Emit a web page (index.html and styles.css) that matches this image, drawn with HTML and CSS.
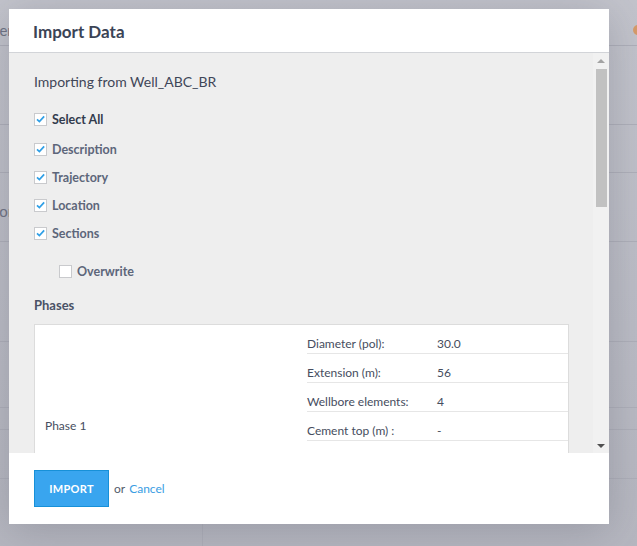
FILE: index.html
```html
<!DOCTYPE html>
<html lang="en">
<head>
<meta charset="utf-8">
<title>Import Data</title>
<link rel="stylesheet" href="styles.css">
</head>
<body>
<div class="page">
  <div class="topbar">
    <span class="crumb">Center</span>
    <span class="badge"></span>
  </div>
  <div class="bg-row h79"></div>
  <div class="bg-row h48"></div>
  <div class="bg-row h69"><span class="bg-text">Store</span></div>
  <div class="bg-row h100"></div>
  <div class="bg-row h66"></div>
  <div class="bg-row h22"></div>
  <div class="bg-row h49"></div>
  <div class="bg-last"><div class="bg-col"></div></div>
</div>

<div class="modal">
  <div class="modal-header">
    <h2 class="modal-title">Import Data</h2>
  </div>
  <div class="modal-body">
    <div class="scroll-content">
      <p class="source">Importing from Well_ABC_BR</p>
      <label class="check-row select-all"><span class="box checked"><svg viewBox="0 0 12 12" width="12" height="12"><path d="M2.2 6.3 L4.8 8.8 L10 3.2" fill="none" stroke="#2f9fe6" stroke-width="1.9"/></svg></span><span class="label">Select All</span></label>
      <label class="check-row"><span class="box checked"><svg viewBox="0 0 12 12" width="12" height="12"><path d="M2.2 6.3 L4.8 8.8 L10 3.2" fill="none" stroke="#2f9fe6" stroke-width="1.9"/></svg></span><span class="label">Description</span></label>
      <label class="check-row"><span class="box checked"><svg viewBox="0 0 12 12" width="12" height="12"><path d="M2.2 6.3 L4.8 8.8 L10 3.2" fill="none" stroke="#2f9fe6" stroke-width="1.9"/></svg></span><span class="label">Trajectory</span></label>
      <label class="check-row"><span class="box checked"><svg viewBox="0 0 12 12" width="12" height="12"><path d="M2.2 6.3 L4.8 8.8 L10 3.2" fill="none" stroke="#2f9fe6" stroke-width="1.9"/></svg></span><span class="label">Location</span></label>
      <label class="check-row"><span class="box checked"><svg viewBox="0 0 12 12" width="12" height="12"><path d="M2.2 6.3 L4.8 8.8 L10 3.2" fill="none" stroke="#2f9fe6" stroke-width="1.9"/></svg></span><span class="label">Sections</span></label>
      <label class="check-row sub"><span class="box"></span><span class="label">Overwrite</span></label>
      <h3 class="section-title">Phases</h3>
      <div class="phase-table">
        <div class="phase-name">Phase 1</div>
        <div class="phase-props">
          <div class="prop"><span class="k">Diameter (pol):</span><span class="v">30.0</span></div>
          <div class="prop"><span class="k">Extension (m):</span><span class="v">56</span></div>
          <div class="prop"><span class="k">Wellbore elements:</span><span class="v">4</span></div>
          <div class="prop"><span class="k">Cement top (m) :</span><span class="v">-</span></div>
          <div class="prop"><span class="k">Casing shoe (m):</span><span class="v">56</span></div>
          <div class="prop"><span class="k">Fluid:</span><span class="v">-</span></div>
          <div class="prop"><span class="k">Notes:</span><span class="v">-</span></div>
        </div>
      </div>
    </div>
    <div class="scrollbar">
      <span class="arrow up"></span>
      <span class="thumb"></span>
      <span class="track"></span>
      <span class="arrow down"></span>
    </div>
  </div>
  <div class="modal-footer">
    <button class="btn-primary" type="button">Import</button>
    <span class="or">or</span>
    <a class="cancel" href="#">Cancel</a>
  </div>
</div>
</body>
</html>
```

FILE: styles.css
```css
* { box-sizing: border-box; }

html, body {
  margin: 0;
  padding: 0;
  height: 100%;
}

body {
  font-family: "Lato", "Liberation Sans", sans-serif;
  background: #bdbec7;
  overflow: hidden;
}

.page {
  display: flex;
  flex-direction: column;
  height: 546px;
  background: linear-gradient(180deg, #c3c4cc 0%, #bbbcc5 60%, #b6b7c0 100%);
}

.topbar {
  height: 46px;
  flex: none;
  display: flex;
  align-items: center;
  justify-content: space-between;
  border-bottom: 1px solid #aeafb9;
  padding-top: 14px;
}

.crumb {
  margin-left: -32px;
  font-size: 15px;
  color: #6f7384;
}

.badge {
  width: 10px;
  height: 10px;
  border-radius: 50%;
  background: #d69b6a;
  margin-right: -6px;
}

.bg-row {
  flex: none;
  border-bottom: 1px solid #aeafb9;
  display: flex;
  align-items: flex-end;
}

.h79 { height: 79px; }
.h48 { height: 48px; }
.h69 { height: 69px; }
.h100 { height: 100px; }
.h66 { height: 66px; }
.h22 { height: 22px; }
.h49 { height: 49px; }

.bg-text {
  margin-left: -14px;
  margin-bottom: 21px;
  font-size: 15px;
  color: #6f7384;
}

.bg-last {
  flex: 1;
  display: flex;
}

.bg-col {
  width: 203px;
  border-right: 1px solid #aeafb9;
}

/* modal */
.modal {
  position: absolute;
  left: 9px;
  top: 9px;
  width: 600px;
  height: 515px;
  background: #fff;
  display: flex;
  flex-direction: column;
  box-shadow: 0 6px 40px rgba(60, 62, 80, 0.25);
}

.modal-header {
  height: 44px;
  flex: none;
  padding: 13px 24px 0;
  border-bottom: 1px solid #d2d4d8;
}

.modal-title {
  margin: 0;
  font-size: 17px;
  line-height: 20px;
  font-weight: 700;
  color: #3b4456;
}

.modal-body {
  height: 400px;
  flex: none;
  display: flex;
  background: #eeeeee;
}

.scroll-content {
  flex: 1;
  overflow: hidden;
  padding: 19px 24px 0 25px;
}

.source {
  margin: 0 0 13px;
  font-size: 14px;
  line-height: 20px;
  color: #3f4658;
}

.check-row {
  display: flex;
  align-items: center;
  height: 28px;
  gap: 5px;
}

.select-all {
  margin-bottom: 2px;
}

.box {
  width: 13px;
  height: 13px;
  flex: none;
  background: #fff;
  border: 1px solid #c9cacd;
  display: flex;
  align-items: center;
  justify-content: center;
}

.box svg { display: block; }

.label {
  font-size: 12.5px;
  font-weight: 700;
  color: #5d667a;
}

.select-all .label {
  color: #323b4d;
}

.check-row.sub {
  margin-top: 10px;
  padding-left: 25px;
}

.section-title {
  margin: 10px 0 9px;
  font-size: 13px;
  line-height: 20px;
  font-weight: 700;
  color: #4a5266;
}

.phase-table {
  display: flex;
  background: #fff;
  border: 1px solid #dcdcdc;
}

.phase-name {
  width: 272px;
  flex: none;
  display: flex;
  align-items: center;
  padding-left: 10px;
  padding-bottom: 2px;
  font-size: 12px;
  color: #464d5e;
}

.phase-props {
  flex: 1;
  display: flex;
  flex-direction: column;
}

.prop {
  height: 29px;
  display: flex;
  padding-top: 11px;
  border-bottom: 1px solid #e6e6e6;
  font-size: 12px;
  line-height: 16px;
  color: #464d5e;
}

.k { width: 130px; flex: none; }

.scrollbar {
  width: 16px;
  flex: none;
  background: #f1f1f1;
  display: flex;
  flex-direction: column;
  align-items: center;
  padding: 6px 0 5px;
}

.arrow {
  width: 0;
  height: 0;
  border-left: 4px solid transparent;
  border-right: 4px solid transparent;
  flex: none;
}

.arrow.up {
  border-bottom: 4px solid #a3a3a3;
}

.arrow.down {
  border-top: 4px solid #505050;
}

.thumb {
  width: 11px;
  height: 138px;
  margin-top: 6px;
  background: #c1c1c1;
  flex: none;
}

.track { flex: 1; }

/* footer */
.modal-footer {
  flex: 1;
  display: flex;
  align-items: center;
  padding: 0 25px;
}

.btn-primary {
  width: 75px;
  height: 37px;
  margin: 0;
  padding: 0;
  background: #39a5ef;
  border: 1px solid #1790d8;
  border-radius: 0;
  color: #fff;
  font-family: inherit;
  font-size: 11px;
  font-weight: 700;
  text-transform: uppercase;
  letter-spacing: 0.3px;
}

.or {
  margin-left: 5px;
  font-size: 12px;
  color: #535b6c;
}

.cancel {
  margin-left: 4px;
  font-size: 12px;
  color: #3a9de3;
  text-decoration: none;
}
```
